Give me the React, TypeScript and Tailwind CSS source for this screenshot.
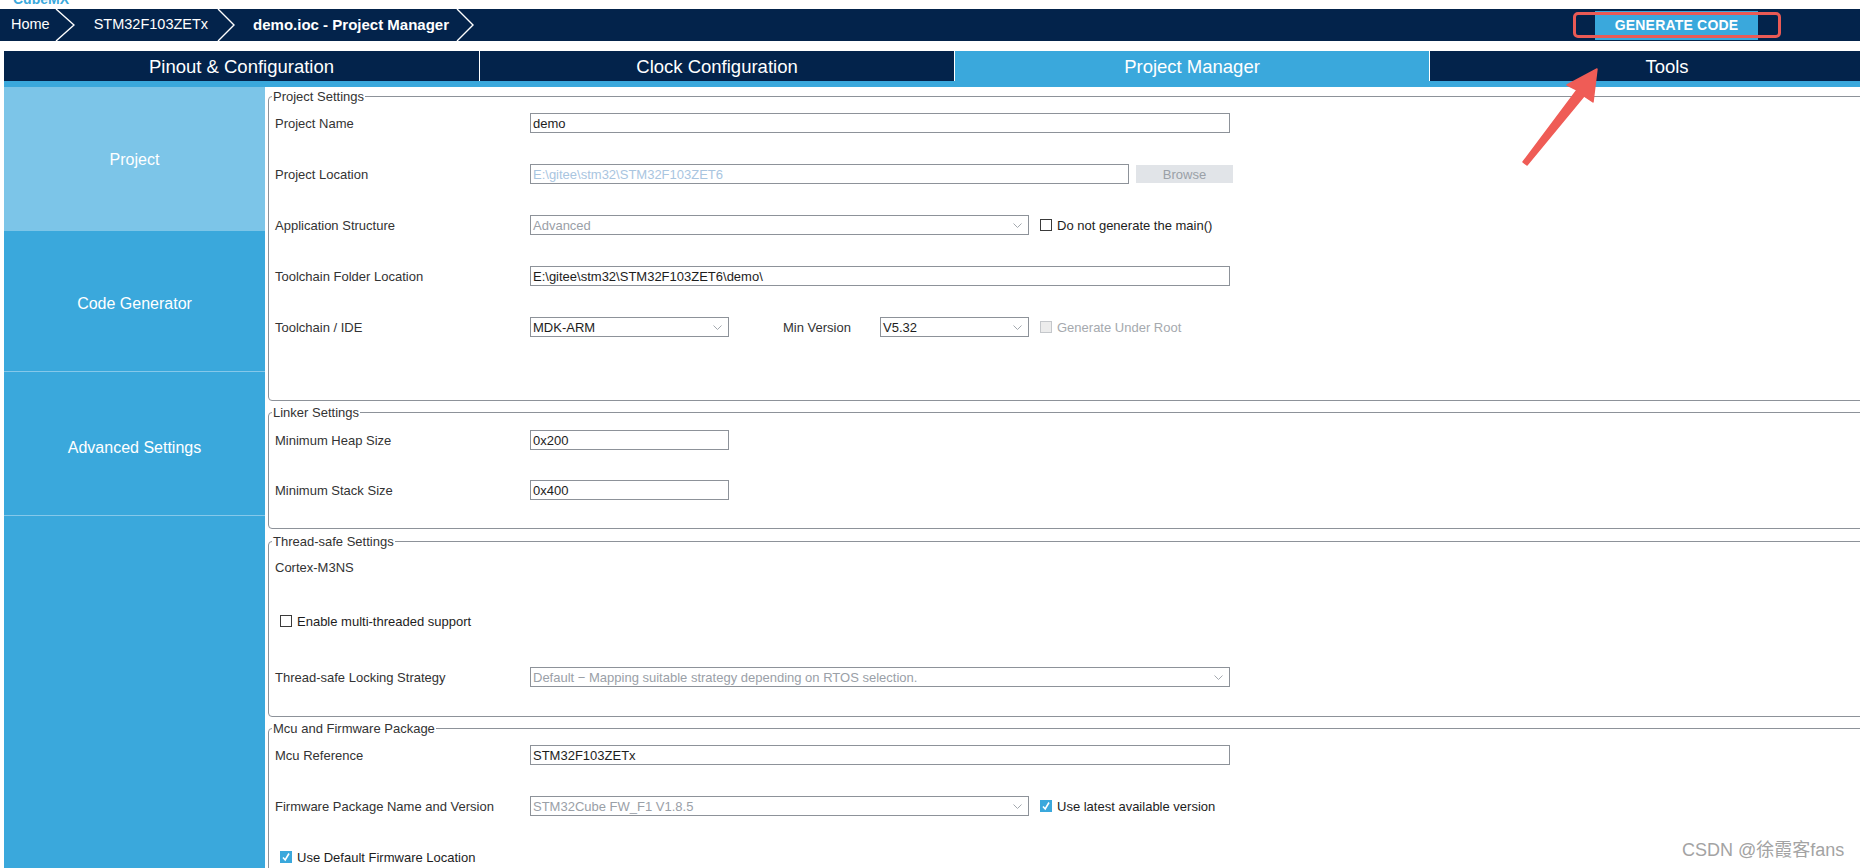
import React from "react";

const NAVY = "bg-[#03234b]";

function Chevron({ w = 19 }: { w?: number }) {
  return (
    <svg width={w} height={32} viewBox={`0 0 ${w} 32`} className="block shrink-0">
      <polyline points={`1,0 ${w - 1},16 1,32`} fill="none" stroke="#ffffff" strokeWidth="1.4" />
    </svg>
  );
}

function SelectArrow() {
  return (
    <svg width="9" height="6" viewBox="0 0 9 6" className="absolute right-[6px] top-[7px]">
      <polyline points="0.5,0.5 4.5,4.5 8.5,0.5" fill="none" stroke="#a3a8ae" strokeWidth="1" />
    </svg>
  );
}

function Field({
  w,
  value,
  tone = "text-[#1d1d1d]",
  select = false,
}: {
  w: string;
  value: string;
  tone?: string;
  select?: boolean;
}) {
  return (
    <div className={`relative h-[20px] ${w} shrink-0 overflow-hidden border border-[#8d9299] bg-white pl-[2px] leading-[19px] ${tone}`}>
      {value}
      {select && <SelectArrow />}
    </div>
  );
}

function Check({ checked = false, disabled = false }: { checked?: boolean; disabled?: boolean }) {
  if (checked) {
    return (
      <span className="flex h-[12px] w-[12px] shrink-0 items-center justify-center bg-[#3aa8dc]">
        <svg width="10" height="10" viewBox="0 0 10 10" className="block">
          <polyline points="2,5.5 4.2,8 8,1.5" fill="none" stroke="#ffffff" strokeWidth="1.6" />
        </svg>
      </span>
    );
  }
  return (
    <span
      className={`block h-[12px] w-[12px] shrink-0 border ${disabled ? "border-[#c4c7cb] bg-[#ececec]" : "border-[#3a3a3a] bg-white"}`}
    />
  );
}

function Row({ label, children }: { label?: string; children?: React.ReactNode }) {
  return (
    <div className="flex h-[20px] items-center">
      {label !== undefined && <div className="w-[255px] shrink-0 pt-[2px]">{label}</div>}
      {children}
    </div>
  );
}

function Group({
  title,
  className,
  body,
  children,
}: {
  title: string;
  className: string;
  body: string;
  children: React.ReactNode;
}) {
  return (
    <fieldset className={`rounded-[4px] border border-[#8d9299] pl-[6px] ${className}`}>
      <legend className="-ml-[3px] px-[1px] leading-[15px] text-[#333]">{title}</legend>
      <div className={`flex flex-col ${body}`}>{children}</div>
    </fieldset>
  );
}

export default function App() {
  const tabs = ["Pinout & Configuration", "Clock Configuration", "Project Manager", "Tools"];
  return (
    <div className="relative h-[868px] w-[1860px] overflow-hidden bg-white font-['Liberation_Sans',Arial,sans-serif] text-[13px] text-[#333]">
      {/* app title, cut off at the top edge as in the capture */}
      <div className="h-[9px] overflow-hidden pl-[13px]">
        <div className="-mt-[8px] text-[14px] font-bold leading-[14px] text-[#3aa8dc]">CubeMX</div>
      </div>

      {/* breadcrumb bar */}
      <div className={`flex h-[32px] items-center text-[14.5px] text-white ${NAVY}`}>
        <span className="ml-[11px]">Home</span>
        <span className="ml-[5px]"><Chevron w={20} /></span>
        <span className="ml-[19px]">STM32F103ZETx</span>
        <span className="ml-[9px]"><Chevron w={18} /></span>
        <span className="ml-[18px] text-[15px] font-bold">demo.ioc - Project Manager</span>
        <span className="ml-[7px]"><Chevron w={18} /></span>
        <div className="ml-auto mr-[102px] flex h-[29px] w-[163px] items-center justify-center bg-[#3aa8dc] text-[14px] font-bold tracking-[0.2px]">
          GENERATE CODE
        </div>
      </div>

      {/* perspective tabs */}
      <div className="ml-[4px] mt-[10px] flex h-[30px]">
        {tabs.map((t, i) => (
          <div
            key={t}
            className={`flex w-[475px] shrink-0 items-center justify-center pt-[1px] text-[18.5px] text-white ${
              i > 0 ? "border-l border-white" : ""
            } ${i === 2 ? "bg-[#3aa8dc]" : NAVY}`}
          >
            {t}
          </div>
        ))}
      </div>
      <div className="ml-[4px] h-[6px] bg-[#3aa8dc]" />

      <div className="flex h-[781px]">
        {/* side menu */}
        <div className="ml-[4px] flex w-[261px] shrink-0 flex-col text-[16px] text-white">
          <div className="flex h-[144px] items-center justify-center bg-[#7cc5e8] pt-[2px]">Project</div>
          <div className="flex h-[141px] items-center justify-center border-b border-[#85c8ea] bg-[#3aa8dc] pt-[5px]">
            Code Generator
          </div>
          <div className="flex h-[144px] items-center justify-center border-b border-[#85c8ea] bg-[#3aa8dc] pt-[8px]">
            Advanced Settings
          </div>
          <div className="flex-1 bg-[#3aa8dc]" />
        </div>

        {/* settings */}
        <div className="ml-[3px] flex w-[1640px] shrink-0 flex-col">
          <Group title="Project Settings" className="mt-[2px]" body="gap-[31px] pt-[9px] pb-[63px]">
            <Row label="Project Name">
              <Field w="w-[700px]" value="demo" />
            </Row>
            <Row label="Project Location">
              <Field w="w-[599px]" value="E:\gitee\stm32\STM32F103ZET6" tone="text-[#a9c5df]" />
              <div className="ml-[7px] flex h-[18px] w-[97px] items-center justify-center bg-[#e1e4e8] pt-[1px] text-[#9aa0a7]">
                Browse
              </div>
            </Row>
            <Row label="Application Structure">
              <Field w="w-[499px]" value="Advanced" tone="text-[#9aa0a7]" select />
              <span className="ml-[11px]"><Check /></span>
              <span className="ml-[5px] pt-[2px] text-[#1d1d1d]">Do not generate the main()</span>
            </Row>
            <Row label="Toolchain Folder Location">
              <Field w="w-[700px]" value="E:\gitee\stm32\STM32F103ZET6\demo\" />
            </Row>
            <Row label="Toolchain / IDE">
              <Field w="w-[199px]" value="MDK-ARM" select />
              <span className="ml-[54px] w-[97px] shrink-0 pt-[2px]">Min Version</span>
              <Field w="w-[149px]" value="V5.32" select />
              <span className="ml-[11px]"><Check disabled /></span>
              <span className="ml-[5px] pt-[2px] text-[#a5a9ae]">Generate Under Root</span>
            </Row>
          </Group>

          <Group title="Linker Settings" className="mt-[4px]" body="gap-[30px] pt-[10px] pb-[28px]">
            <Row label="Minimum Heap Size">
              <Field w="w-[199px]" value="0x200" />
            </Row>
            <Row label="Minimum Stack Size">
              <Field w="w-[199px]" value="0x400" />
            </Row>
          </Group>

          <Group title="Thread-safe Settings" className="mt-[5px]" body="pt-[8px] pb-[29px]">
            <Row>
              <span className="pt-[2px]">Cortex-M3NS</span>
            </Row>
            <div className="mt-[34px]">
              <Row>
                <span className="ml-[5px]"><Check /></span>
                <span className="ml-[5px] pt-[2px] text-[#1d1d1d]">Enable multi-threaded support</span>
              </Row>
            </div>
            <div className="mt-[36px]">
              <Row label="Thread-safe Locking Strategy">
                <Field
                  w="w-[700px]"
                  value="Default  −  Mapping suitable strategy depending on RTOS selection."
                  tone="text-[#9aa0a7]"
                  select
                />
              </Row>
            </div>
          </Group>

          <Group title="Mcu and Firmware Package" className="mt-[4px]" body="gap-[31px] pt-[9px] pb-[30px]">
            <Row label="Mcu Reference">
              <Field w="w-[700px]" value="STM32F103ZETx" />
            </Row>
            <Row label="Firmware Package Name and Version">
              <Field w="w-[499px]" value="STM32Cube FW_F1 V1.8.5" tone="text-[#9aa0a7]" select />
              <span className="ml-[11px]"><Check checked /></span>
              <span className="ml-[5px] pt-[2px] text-[#1d1d1d]">Use latest available version</span>
            </Row>
            <Row>
              <span className="ml-[5px]"><Check checked /></span>
              <span className="ml-[5px] pt-[2px] text-[#1d1d1d]">Use Default Firmware Location</span>
            </Row>
          </Group>
        </div>
      </div>

      {/* annotation: red frame around the button and the arrow */}
      <div className="absolute left-[1573px] top-[12px] h-[26px] w-[208px] rounded-[5px] border-[3px] border-[#ea5a55]" />
      <svg className="absolute left-[1515px] top-[60px]" width="90" height="115" viewBox="1515 60 90 115">
        <polygon
          points="1597,69 1593,102 1584,96 1527,165 1523,162 1577,90 1567,85"
          fill="#ef5c56"
          stroke="#ef5c56"
          strokeWidth="1.5"
          strokeLinejoin="round"
        />
      </svg>

      {/* blog watermark */}
      <div className="absolute left-[1682px] top-[839px] font-['Liberation_Sans','Noto_Sans_CJK_SC',sans-serif] text-[18px] leading-[22px] text-[#a3a3a3]">
        CSDN @徐霞客fans
      </div>
    </div>
  );
}
